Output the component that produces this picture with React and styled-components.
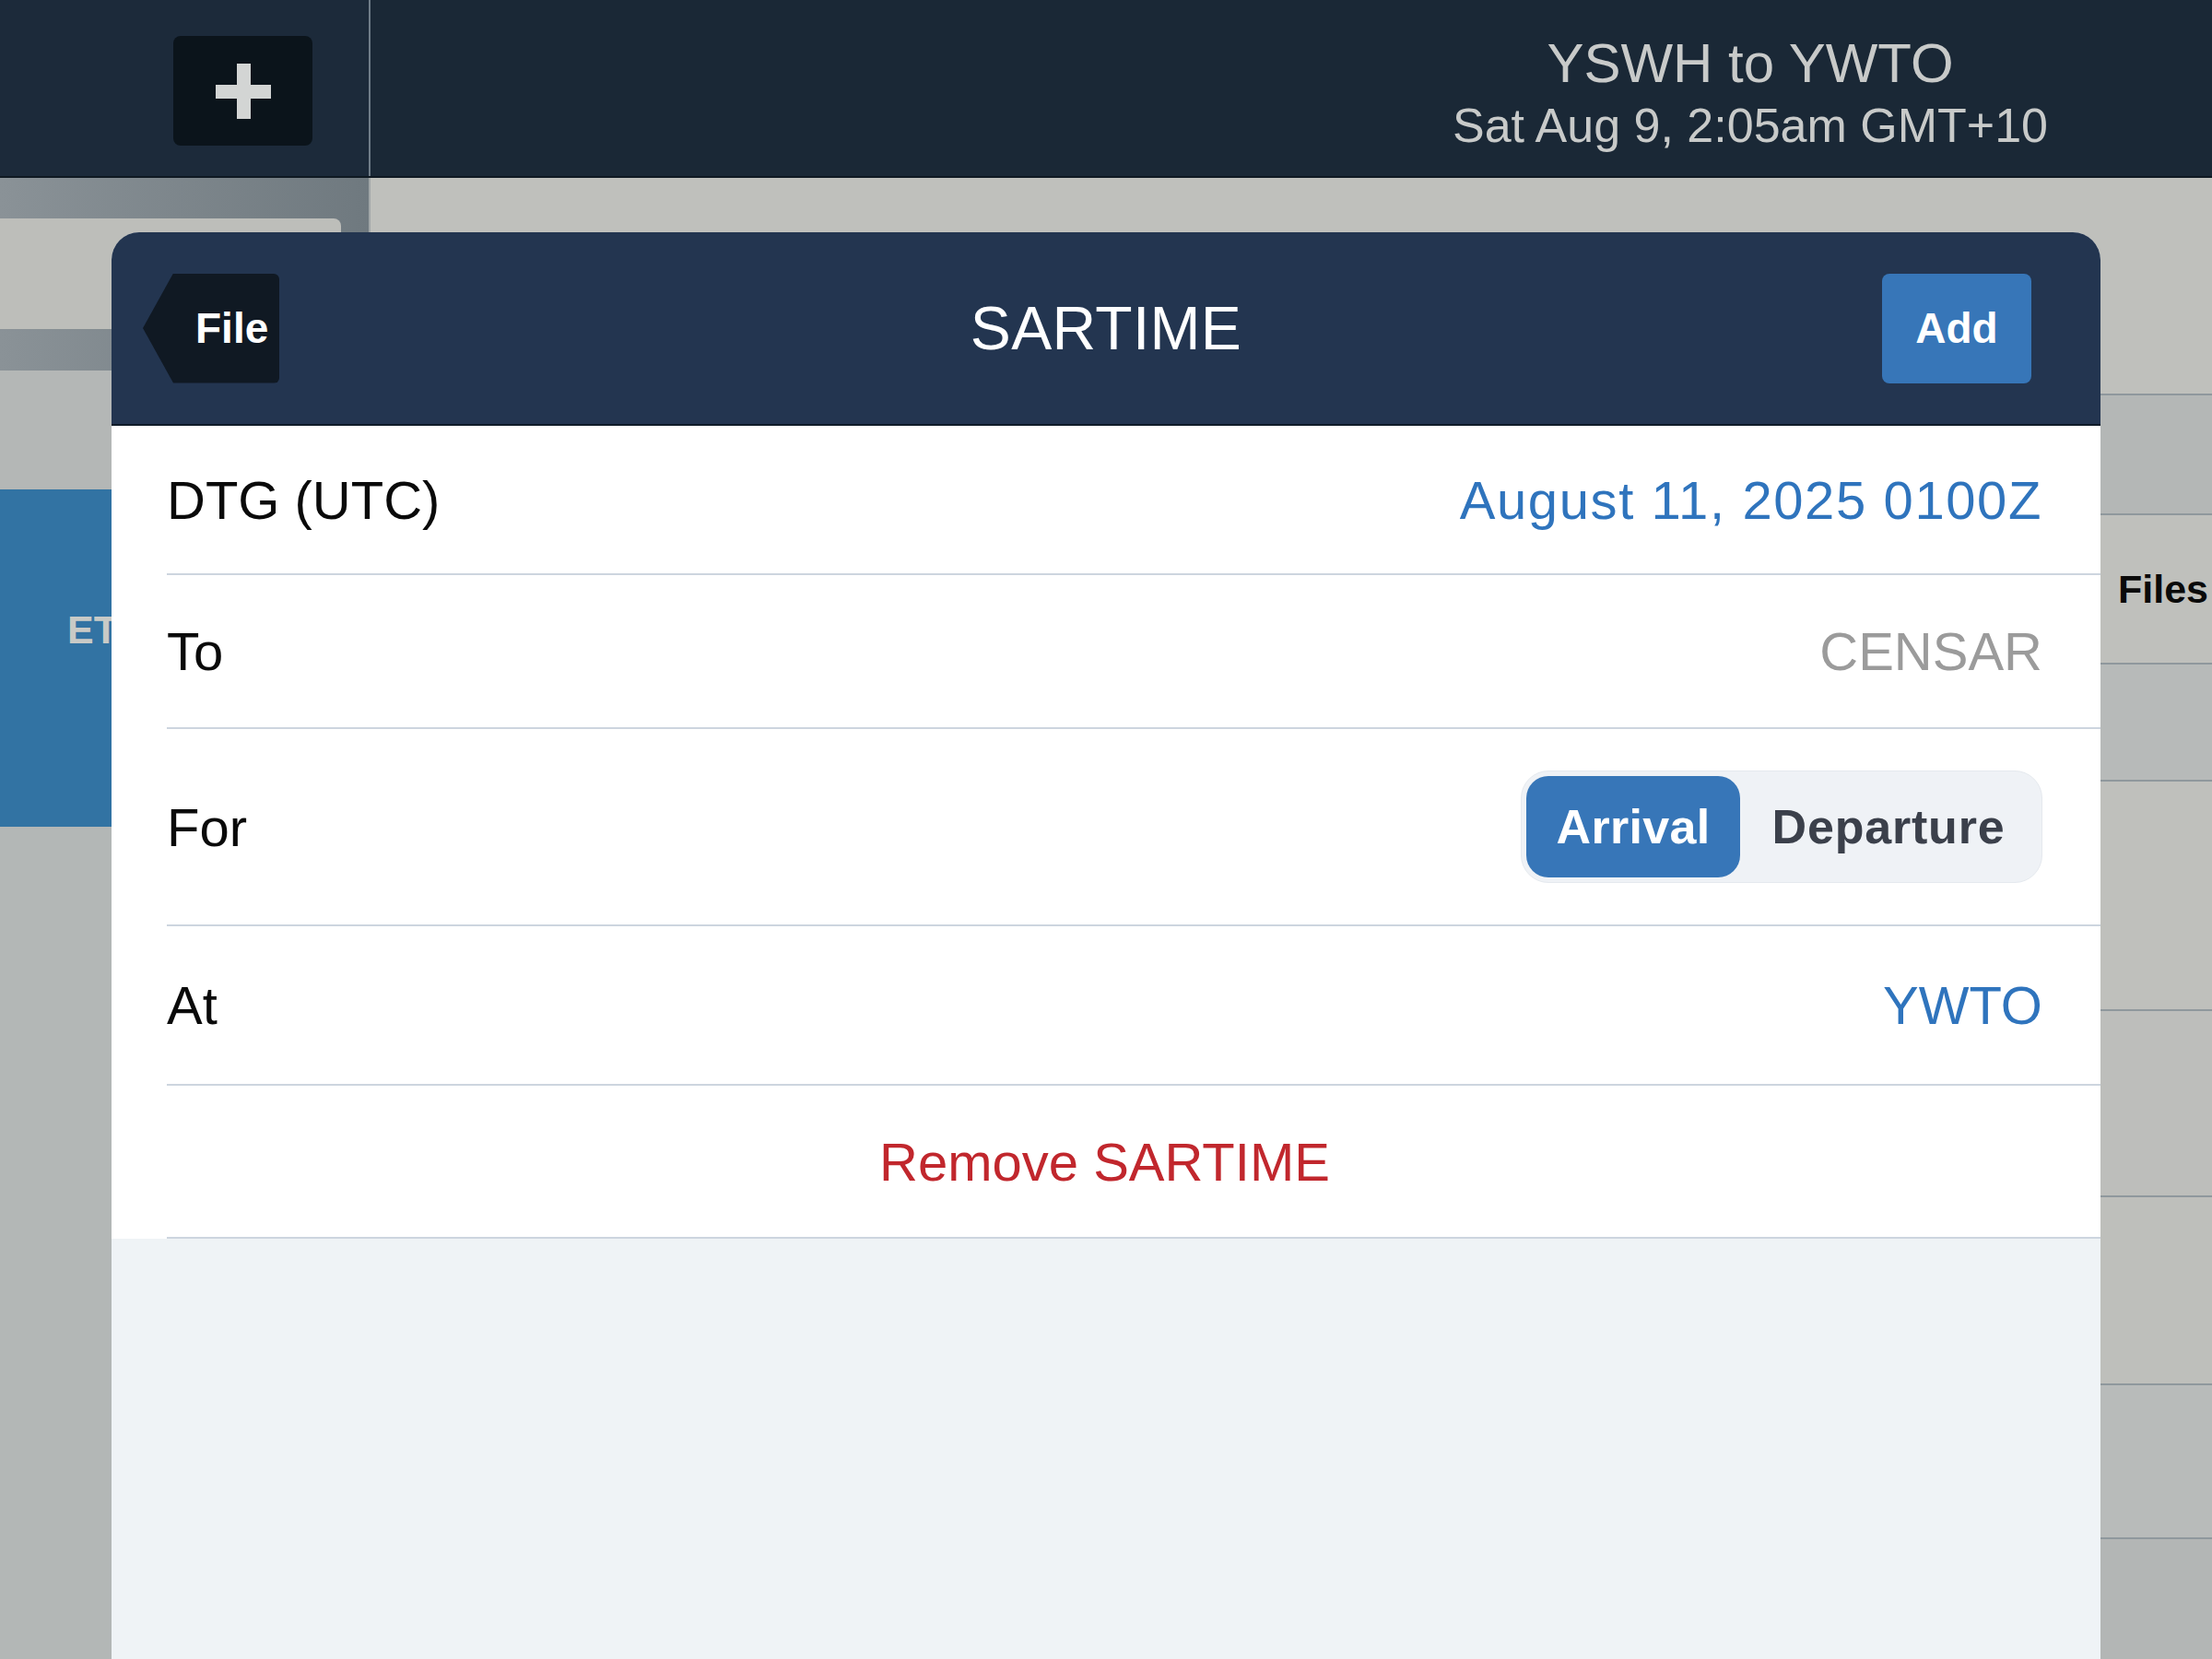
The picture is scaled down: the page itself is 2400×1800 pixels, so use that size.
import React from 'react';
import styled, { createGlobalStyle } from 'styled-components';

const GlobalStyle = createGlobalStyle`
  html, body { margin: 0; padding: 0; background: #bfc0bc; }
  body { font-family: "Liberation Sans", Arial, Helvetica, sans-serif; }
  * { box-sizing: border-box; }
  button { font-family: inherit; }
`;

const Screen = styled.div`
  position: relative;
  width: 2400px;
  height: 1800px;
  overflow: hidden;
  display: flex;
  flex-direction: column;
  background: #bfc0bc;
`;

/* ---------- top bar ---------- */
const TopBar = styled.header`
  height: 193px;
  flex: none;
  display: flex;
  background: #1a2836;
  border-bottom: 2px solid #0f1922;
`;

const TopLeft = styled.div`
  width: 400px;
  flex: none;
  display: flex;
  align-items: flex-start;
  justify-content: flex-end;
  padding: 39px 61px 0 0;
  background: #1c2a3a;
`;

const PlusButton = styled.button`
  width: 151px;
  height: 119px;
  border: none;
  border-radius: 8px;
  background: #0b141b;
  display: flex;
  align-items: center;
  justify-content: center;
  padding: 0;
`;

const VDivider = styled.div`
  width: 2px;
  flex: none;
  background: ${(p) => p.$color};
`;

const TitleArea = styled.div`
  flex: 1;
  display: flex;
  justify-content: flex-end;
  align-items: flex-start;
  padding: 36px 178px 0 0;
`;

const TitleStack = styled.div`
  display: flex;
  flex-direction: column;
  align-items: center;
  color: #c8cac9;
`;

const RouteTitle = styled.div`
  font-size: 60px;
  line-height: 66px;
  white-space: nowrap;
`;

const RouteSub = styled.div`
  font-size: 52px;
  line-height: 62px;
  margin-top: 3px;
  white-space: nowrap;
`;

/* ---------- dimmed background body ---------- */
const Body = styled.div`
  flex: 1;
  display: flex;
  min-height: 0;
`;

const SideColumn = styled.aside`
  width: 400px;
  flex: none;
  display: flex;
  flex-direction: column;
  padding-top: 44px;
  background: linear-gradient(90deg, #8a9297 0%, #6f797f 100%);
`;

const SideCard = styled.div`
  flex: ${(p) => (p.$fill ? '1' : 'none')};
  height: ${(p) => (p.$h ? `${p.$h}px` : 'auto')};
  margin-right: ${(p) => p.$mr || 0}px;
  margin-top: ${(p) => p.$mt || 0}px;
  border-top-right-radius: ${(p) => p.$r || 0}px;
  background: ${(p) => p.$bg};
  padding: ${(p) => (p.$pad ? '131px 0 0 73px' : '0')};
`;

const SideLabel = styled.div`
  font-size: 43px;
  line-height: 43px;
  font-weight: 700;
  color: #c9cac6;
`;

const MainArea = styled.main`
  flex: 1;
  display: flex;
  flex-direction: column;
  padding-top: 234px;
  background: #bfc0bc;
`;

const ListRow = styled.div`
  flex: ${(p) => (p.$h ? 'none' : '1')};
  height: ${(p) => (p.$h ? `${p.$h}px` : 'auto')};
  border-top: 2px solid #8f989d;
  background: ${(p) => p.$bg};
  display: flex;
  align-items: center;
  justify-content: flex-end;
  padding-right: 4px;
`;

const ListText = styled.span`
  font-size: 43px;
  font-weight: 700;
  color: #0a0a0a;
`;

/* ---------- modal ---------- */
const Modal = styled.section`
  position: absolute;
  left: 121px;
  right: 121px;
  top: 252px;
  bottom: 0;
  border-radius: 30px 30px 0 0;
  overflow: hidden;
  background: #eff3f6;
  display: flex;
  flex-direction: column;
`;

const ModalHeader = styled.div`
  height: 210px;
  flex: none;
  display: grid;
  grid-template-columns: 1fr auto 1fr;
  align-items: center;
  padding: 0 34px;
  background: #233550;
  border-bottom: 2px solid #0f1b28;
`;

const BackButton = styled.button`
  justify-self: start;
  width: 148px;
  height: 119px;
  border: none;
  border-radius: 6px;
  background: #101923;
  clip-path: polygon(33px 0, 100% 0, 100% 100%, 33px 100%, 0 50%);
  color: #ffffff;
  font-size: 46px;
  font-weight: 700;
  text-align: left;
  padding: 0 0 0 57px;
`;

const ModalTitle = styled.h1`
  margin: 0;
  font-size: 66px;
  font-weight: 400;
  color: #ffffff;
  justify-self: center;
  letter-spacing: 0.3px;
`;

const AddButton = styled.button`
  justify-self: end;
  width: 162px;
  height: 119px;
  margin-right: 41px;
  border: none;
  border-radius: 8px;
  background: #3776b8;
  color: #ffffff;
  font-size: 46px;
  font-weight: 700;
  padding: 0;
`;

const FormList = styled.div`
  flex: none;
  background: #ffffff;
`;

const FormRow = styled.div`
  height: ${(p) => p.$h}px;
  margin-left: 60px;
  padding-right: 63px;
  display: flex;
  align-items: center;
  justify-content: ${(p) => (p.$center ? 'center' : 'space-between')};
  border-bottom: 2px solid #cdd5df;
  font-size: 58px;
`;

const Label = styled.span`
  color: #0a0a0a;
`;

const Value = styled.span`
  color: ${(p) => p.$color};
  letter-spacing: ${(p) => p.$spacing || 0}px;
`;

const Segmented = styled.div`
  display: flex;
  width: 566px;
  height: 122px;
  padding: 5px;
  border-radius: 30px;
  background: #eff2f6;
  border: 1px solid #e5e9ee;
`;

const Segment = styled.button`
  flex: ${(p) => (p.$active ? 'none' : '1')};
  width: ${(p) => (p.$active ? '232px' : 'auto')};
  border: none;
  border-radius: 24px;
  padding: 0;
  font-size: 52px;
  font-weight: 700;
  letter-spacing: ${(p) => (p.$active ? '0.3px' : '0.8px')};
  background: ${(p) => (p.$active ? '#3776b8' : 'transparent')};
  color: ${(p) => (p.$active ? '#ffffff' : '#3b404b')};
`;

const PlusIcon = () => (
  <svg width="60" height="60" viewBox="0 0 60 60" aria-hidden="true">
    <rect x="0" y="23" width="60" height="15" fill="#d3d5d4" />
    <rect x="23" y="0" width="15" height="60" fill="#d3d5d4" />
  </svg>
);

const listRows = [
  { h: 130, bg: '#b4b7b6' },
  { h: 162, bg: '#bfc0bc', text: 'Files' },
  { h: 127, bg: '#b7bab9' },
  { h: 249, bg: '#bfc0bc' },
  { h: 202, bg: '#bdbebb' },
  { h: 204, bg: '#bebfbb' },
  { h: 167, bg: '#b8bbba' },
  { bg: '#b3b6b5' },
];

export default function App() {
  return (
    <>
      <GlobalStyle />
      <Screen>
        <TopBar>
          <TopLeft>
            <PlusButton aria-label="Add">
              <PlusIcon />
            </PlusButton>
          </TopLeft>
          <VDivider $color="#6f7c88" />
          <TitleArea>
            <TitleStack>
              <RouteTitle>YSWH to YWTO</RouteTitle>
              <RouteSub>Sat Aug 9, 2:05am GMT+10</RouteSub>
            </TitleStack>
          </TitleArea>
        </TopBar>

        <Body>
          <SideColumn>
            <SideCard $h={120} $mr={30} $r={8} $bg="#bdbeba" />
            <SideCard $h={129} $mt={45} $bg="#b4b7b6" />
            <SideCard $h={366} $bg="#3273a3" $pad>
              <SideLabel>ETA</SideLabel>
            </SideCard>
            <SideCard $fill $bg="#b3b7b6" />
          </SideColumn>
          <VDivider $color="#a2a7a8" />
          <MainArea>
            {listRows.map((r, i) => (
              <ListRow key={i} $h={r.h} $bg={r.bg}>
                {r.text && <ListText>{r.text}</ListText>}
              </ListRow>
            ))}
          </MainArea>
        </Body>

        <Modal>
          <ModalHeader>
            <BackButton>File</BackButton>
            <ModalTitle>SARTIME</ModalTitle>
            <AddButton>Add</AddButton>
          </ModalHeader>
          <FormList>
            <FormRow $h={162}>
              <Label>DTG (UTC)</Label>
              <Value $color="#2f74bd" $spacing={1.6}>August 11, 2025 0100Z</Value>
            </FormRow>
            <FormRow $h={167}>
              <Label>To</Label>
              <Value $color="#9b9b9b">CENSAR</Value>
            </FormRow>
            <FormRow $h={214}>
              <Label>For</Label>
              <Segmented>
                <Segment $active>Arrival</Segment>
                <Segment>Departure</Segment>
              </Segmented>
            </FormRow>
            <FormRow $h={173}>
              <Label>At</Label>
              <Value $color="#2f74bd">YWTO</Value>
            </FormRow>
            <FormRow $h={166} $center>
              <Value $color="#c1272d">Remove SARTIME</Value>
            </FormRow>
          </FormList>
        </Modal>
      </Screen>
    </>
  );
}
